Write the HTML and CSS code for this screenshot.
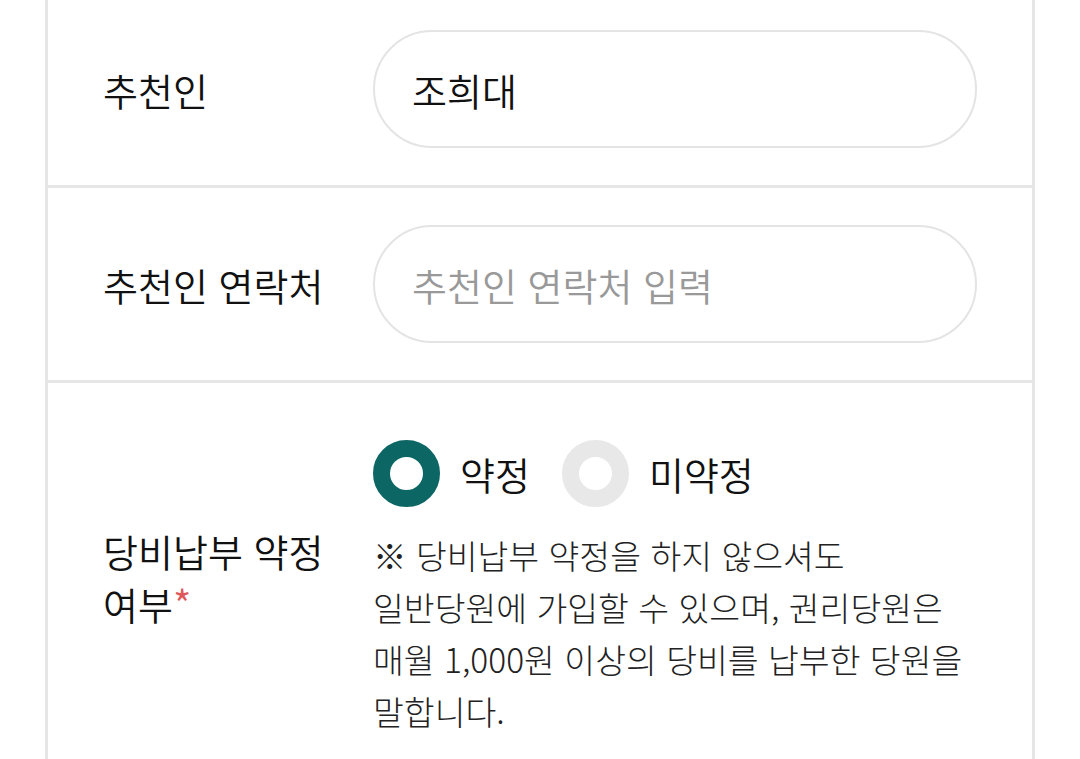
FILE: index.html
```html
<!DOCTYPE html>
<html lang="ko">
<head>
<meta charset="utf-8">
<link rel="stylesheet" href="styles.css">
</head>
<body>
<div class="form">
  <div class="row">
    <div class="label">추천인</div>
    <div class="field">
      <div class="input"><span class="value">조희대</span></div>
    </div>
  </div>
  <div class="row">
    <div class="label">추천인 연락처</div>
    <div class="field">
      <div class="input"><span class="placeholder">추천인 연락처 입력</span></div>
    </div>
  </div>
  <div class="row row-tall">
    <div class="label label-tall">당비납부 약정<br>여부<span class="req">*</span></div>
    <div class="field field-col">
      <div class="radios">
        <label class="radio"><span class="dot dot-on"></span><span class="rtext">약정</span></label>
        <label class="radio"><span class="dot dot-off"></span><span class="rtext">미약정</span></label>
      </div>
      <p class="notice">※ 당비납부 약정을 하지 않으셔도<br>일반당원에 가입할 수 있으며, 권리당원은<br>매월 1,000원 이상의 당비를 납부한 당원을<br>말합니다.</p>
    </div>
  </div>
</div>
</body>
</html>
```

FILE: styles.css
```css
html, body {
  margin: 0;
  padding: 0;
  background: #ffffff;
}
body {
  font-family: "Noto Sans CJK KR", "Noto Sans", sans-serif;
  color: #111111;
  overflow: hidden;
}
.form {
  margin-left: 45px;
  width: 984px;
  margin-top: -7px;
  border-left: 3px solid #e6e6e6;
  border-right: 3px solid #e6e6e6;
}
.row {
  display: grid;
  grid-template-columns: 325px 1fr;
  align-items: center;
  padding: 37px 0 37px 0;
  border-bottom: 3px solid #e6e6e6;
}
.label {
  padding-left: 55px;
  font-size: 38px;
  line-height: 53px;
  font-weight: 350;
  color: #111111;
}
.label-tall {
  padding-bottom: 24px;
}
.req {
  color: #e0585c;
  font-size: 40px;
}
.field {
  padding-right: 55px;
}
.input {
  height: 114px;
  border: 2px solid #e4e4e4;
  border-radius: 60px;
  display: flex;
  align-items: center;
  padding-left: 37px;
}
.value {
  font-size: 38px;
  font-weight: 350;
  color: #111111;
}
.placeholder {
  font-size: 38px;
  font-weight: 350;
  color: #999999;
}
.row-tall {
  padding-top: 57px;
}
.field-col {
  display: flex;
  flex-direction: column;
}
.radios {
  display: flex;
  align-items: center;
  gap: 32px;
}
.radio {
  display: flex;
  align-items: center;
  gap: 20px;
}
.dot {
  width: 33px;
  height: 33px;
  border-radius: 50%;
  background: #ffffff;
  box-sizing: content-box;
  border: 17px solid #0c6664;
}
.dot-off {
  border-color: #e8e8e8;
}
.rtext {
  font-size: 38px;
  font-weight: 350;
  color: #111111;
}
.notice {
  margin: 22px 0 0 0;
  font-size: 33.5px;
  line-height: 52px;
  font-weight: 300;
  color: #222222;
}
```
